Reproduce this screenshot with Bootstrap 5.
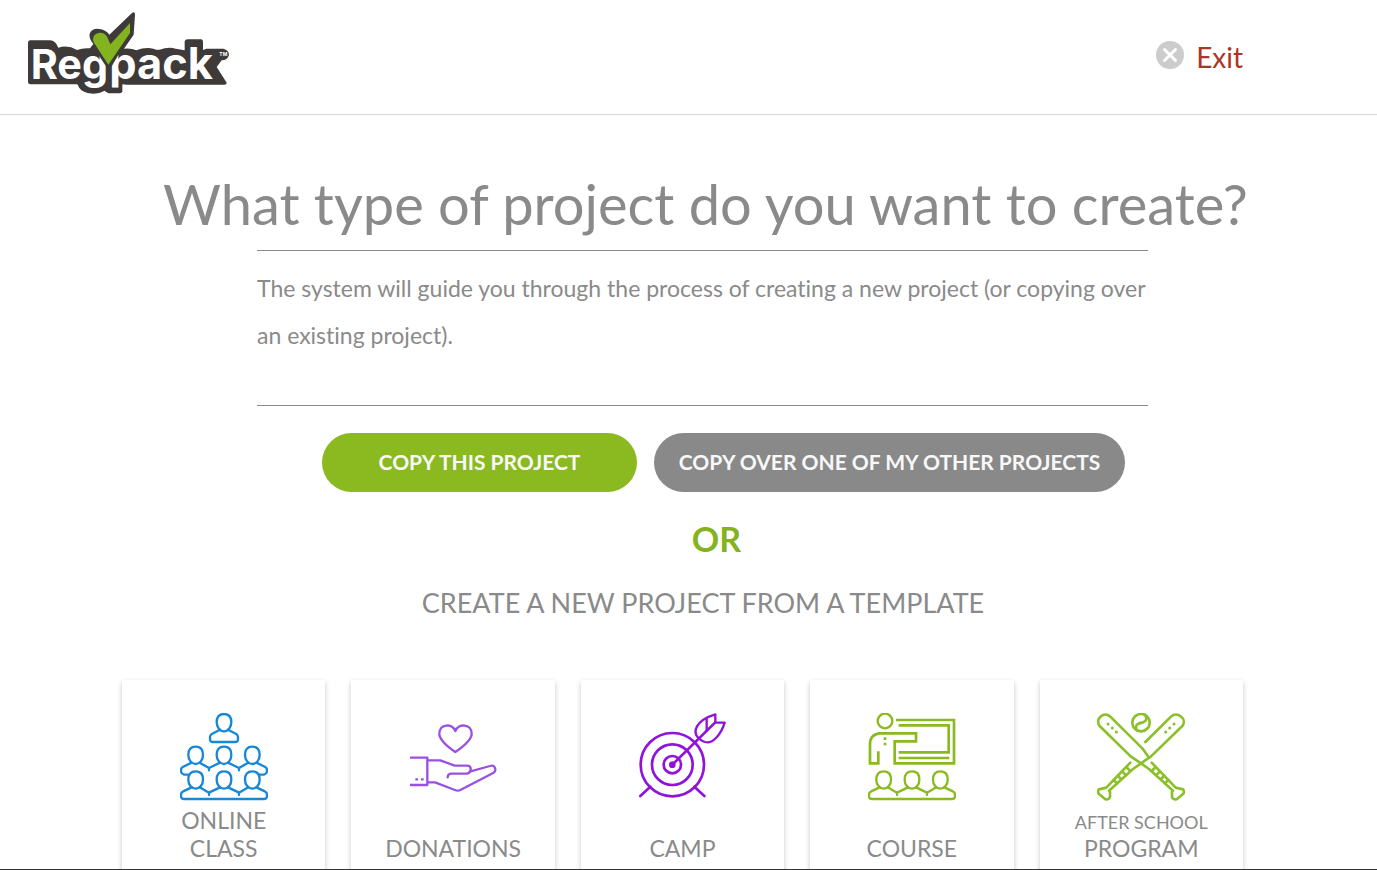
<!DOCTYPE html>
<html lang="en">
<head>
<meta charset="utf-8">
<meta name="viewport" content="width=device-width, initial-scale=1">
<title>Regpack – New project</title>
<link rel="stylesheet" href="https://cdn.jsdelivr.net/npm/bootstrap@5.3.0/dist/css/bootstrap.min.css">
<style>
  body { font-family: Lato, "Liberation Sans", sans-serif; color: #8a8a8a; background: #fff; font-variant-ligatures: none; }
  .shell { border-bottom: 1px solid #333; }
  .top-bar { height: 115px; border-bottom: 1px solid #d8d8d8; padding: 0 134px 0 28px; }
  .exit-link { color: #b03426; font-size: 28px; line-height: 36px; gap: 12px; }
  .content { padding: 0 134px 0 122px; }
  .shifted { padding-left: 41px; }
  .page-title { font-size: 56px; line-height: 70px; margin: 54px 0 11px; white-space: nowrap; }
  .intro { border: solid #8a8a8a; border-width: 1px 0; margin: 0 95px 27px 135px; padding: 14px 0 46px; font-size: 23px; line-height: 47px; }
  .choices { gap: 17px; padding-left: 82px; }
  .btn-choice { --bs-btn-font-size: 21px; --bs-btn-font-weight: 700; --bs-btn-color: #f8f8f8; --bs-btn-hover-color: #fff; --bs-btn-border-width: 0; --bs-btn-padding-x: 22px; height: 59px; padding-bottom: 8px; }
  .btn-this { --bs-btn-bg: #8aba1f; --bs-btn-hover-bg: #7aa71b; min-width: 315px; }
  .btn-other { --bs-btn-bg: #898989; --bs-btn-hover-bg: #777; min-width: 471px; }
  .or-word { color: #84b31e; font-size: 34px; line-height: 44px; font-weight: 700; margin: 25px 0 24px; padding-left: 68px; }
  .sub-title { font-size: 27px; line-height: 36px; margin: 0 0 59px; }
  .templates { --bs-gutter-x: 26px; }
  .template { height: 260px; padding-top: 33px; color: #8a8a8a; font-size: 23px; line-height: 28px; box-shadow: 0 2px 5px rgba(0,0,0,.22); }
  .template-name { height: 61px; }
  .long-line { font-size: 18px; line-height: 24px; }
  .template svg { fill: none; stroke-linecap: round; stroke-linejoin: round; }
</style>
</head>
<body>
<div class="shell vh-100 overflow-hidden">
  <header class="top-bar d-flex justify-content-between align-items-center">
    <a href="#" aria-label="Regpack" class="d-block mb-2">
      <svg class="d-block" width="201" height="82" viewBox="54 36 603 246">
        <path fill="#3d3a39" d="M60 121H120Q137 122 145 143Q174 134 201 150Q220 143 240 145L250 132Q232 110 242 95Q252 82 274 88Q291 94 298 104L366 39Q375 33 375 44L371 104L342 146Q363 143 379 151Q405 141 430 146Q444 151 449 149Q475 140 497 146L524 151V124Q525 118 533 118H574Q579 119 579 125V150L590 146H640Q657 150 657 165Q653 181 635 181L620 201L650 248Q651 254 643 254H350L337 253V275Q334 280 327 280H296Q287 276 284 272Q250 291 216 272Q207 266 202 253H60Q54 252 54 246V128Q54 122 60 121Z"/>
        <g fill="#fff" font-family="Inter, 'Liberation Sans', sans-serif" font-weight="700">
          <text x="62" y="237" font-size="124">Reg</text>
          <text x="298" y="237" font-size="130">pack</text>
        </g>
        <path fill="#3d3a39" d="M262 160L297 212L334 150L330 110H255Z"/>
        <path fill="#83b41d" d="M251 127C241 97 281 88 292 112L301 133L360 69V99L295 194Z"/>
        <text x="628" y="168" fill="#fff" font-family="Inter, sans-serif" font-weight="700" font-size="15">TM</text>
      </svg>
    </a>
    <a href="#" class="exit-link d-flex align-items-center text-decoration-none">
      <svg class="mb-1" width="28" height="28" viewBox="0 0 28 28"><circle cx="14" cy="14" r="14" fill="#ccc"/><path d="M8.500 8.500l11 11M19.500 8.500l-11 11" stroke="#fff" stroke-width="3" stroke-linecap="round"/></svg>
      Exit
    </a>
  </header>

  <main class="content">
    <h1 class="page-title shifted text-center fw-normal">What type of project do you want to create?</h1>
    <p class="intro">The system will guide you through the process of creating a new project (or copying over an existing project).</p>
    <div class="choices d-flex justify-content-center">
      <button type="button" class="btn btn-choice btn-this rounded-pill">COPY THIS PROJECT</button>
      <button type="button" class="btn btn-choice btn-other rounded-pill">COPY OVER ONE OF MY OTHER PROJECTS</button>
    </div>
    <p class="or-word text-center">OR</p>
    <h2 class="sub-title shifted text-center fw-normal">CREATE A NEW PROJECT FROM A TEMPLATE</h2>

    <div class="templates row row-cols-5">
      <div class="col">
        <a href="#" class="template d-flex flex-column align-items-center text-center text-decoration-none">
          <svg width="88" height="88" viewBox="0 0 264 264" stroke="#1787d8" stroke-width="7">
            <defs>
              <path id="head" d="M0 3C-18 3 -22 14 -22 28C-22 43 -12 55 0 55S22 43 22 28C22 14 18 3 0 3Z"/>
              <g id="crowd">
                <use href="#head" x="47"/><use href="#head" x="132"/><use href="#head" x="217"/>
                <path d="M35 51L8 64Q3 67 3 73M59 51L87 67L120 51M144 51L177 67L205 51M229 51L256 64Q261 67 261 73M87 67V74M177 67V74"/>
              </g>
            </defs>
            <use href="#head" x="132"/>
            <path d="M120 50L94 64Q90 67 90 73V80Q91 87 98 87H166Q173 87 174 80V73Q174 67 170 64L144 50"/>
            <use href="#crowd" y="98"/>
            <path d="M3 171V175Q4 183 12 185H24M261 171V175Q260 183 252 185H240"/>
            <use href="#crowd" y="172"/>
            <path d="M3 245V250Q4 258 12 258H252Q260 258 261 250V245"/>
          </svg>
          <span class="template-name d-flex align-items-end">ONLINE<br>CLASS</span>
        </a>
      </div>
      <div class="col">
        <a href="#" class="template d-flex flex-column align-items-center text-center text-decoration-none">
          <svg width="88" height="88" viewBox="0 0 264 264" stroke="#9b51e0" stroke-width="7">
            <path d="M139 117C113 99 91 80 91 62C91 32 130 30 139 54C148 30 188 32 188 62C188 80 165 99 139 117Z"/>
            <path stroke-linecap="butt" d="M3 134H55V216H3M19 199H27M36 199H44"/>
            <path d="M58 142H94L137 158H175C188 158 189 178 175 182H126Q116 183 116 193M182 176L243 159C259 154 263 172 254 179L154 231Q147 235 138 231L78 208H58"/>
          </svg>
          <span class="template-name d-flex align-items-end">DONATIONS</span>
        </a>
      </div>
      <div class="col">
        <a href="#" class="template d-flex flex-column align-items-center text-center text-decoration-none">
          <svg width="88" height="88" viewBox="0 0 264 264" stroke="#9013d8" stroke-width="8">
            <circle cx="103" cy="155" r="95"/><circle cx="103" cy="155" r="61"/><circle cx="103" cy="155" r="26"/>
            <circle cx="103" cy="155" r="6" fill="#9013d8"/>
            <path d="M103 155L231 29M37 221L7 249M169 221L199 249"/>
            <path stroke-width="7" d="M182 76C163 57 171 23 232 4V29H260C250 63 224 94 201 87Q192 84 182 76ZM206 18V53"/>
          </svg>
          <span class="template-name d-flex align-items-end">CAMP</span>
        </a>
      </div>
      <div class="col">
        <a href="#" class="template d-flex flex-column align-items-center text-center text-decoration-none">
          <svg width="88" height="88" viewBox="0 0 264 264" stroke="#8aba1f" stroke-width="7">
            <circle cx="51" cy="24" r="22"/>
            <g stroke-linecap="butt" stroke-linejoin="miter">
              <path stroke-width="8" d="M84 21H258V151H80V85H144V61H35Q6 64 6 94V151H31V115M92 37H242V118H92M92 135H244"/>
              <path stroke-width="8" d="M47 77H55M47 93H55"/>
            </g>
            <use href="#crowd" y="172"/>
            <path d="M3 245V250Q4 258 12 258H252Q260 258 261 250V245"/>
          </svg>
          <span class="template-name d-flex align-items-end">COURSE</span>
        </a>
      </div>
      <div class="col">
        <a href="#" class="template d-flex flex-column align-items-center text-center text-decoration-none">
          <svg width="88" height="88" viewBox="0 0 264 264" stroke="#8bc02b" stroke-width="8">
            <circle cx="132" cy="29" r="26"/>
            <path d="M144 5C151 17 148 25 138 28C118 31 114 39 119 52"/>
            <path d="M156 134L136 106L40 11C22 -6 -8 17 8 39L101 130L132 151L156 168L228 233"/>
            <path d="M145 87L222 11C240 -6 272 17 256 39L162 130L132 151L108 168L36 233"/>
            <path d="M100 149L28 224L6 229Q0 238 7 244L24 258Q34 262 39 253V236M164 149L236 224L258 229Q264 238 257 244L240 258Q230 262 225 253V236"/>
            <path d="M88 162L98 172M75 175L85 185M62 188L72 198M50 201L60 211M176 162L166 172M189 175L179 185M202 188L192 198M214 201L204 211"/>
            <path stroke-width="9" d="M33 33h.1M46 45h.1M58 57h.1M231 33h.1M218 45h.1M206 57h.1"/>
          </svg>
          <span class="template-name d-flex flex-column justify-content-end"><span class="long-line">AFTER SCHOOL</span>PROGRAM</span>
        </a>
      </div>
    </div>
  </main>
</div>
<script src="https://cdn.jsdelivr.net/npm/bootstrap@5.3.0/dist/js/bootstrap.bundle.min.js"></script>
</body>
</html>
